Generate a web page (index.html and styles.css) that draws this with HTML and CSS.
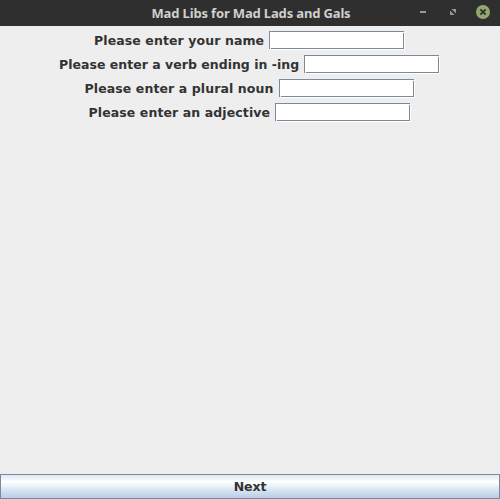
FILE: index.html
```html
<!DOCTYPE html>
<html lang="en">
<head>
<meta charset="utf-8">
<title>Mad Libs for Mad Lads and Gals</title>
<link rel="stylesheet" href="styles.css">
</head>
<body>
<header class="titlebar">
  <h1 class="title">Mad Libs for Mad Lads and Gals</h1>
  <div class="controls">
    <svg width="14" height="14" viewBox="0 0 14 14"><path d="M4 6h6v2H4z" fill="#999"/></svg>
    <svg width="14" height="14" viewBox="0 0 14 14"><path d="M5.5 4H10v4.500zM4 5.500V10h4.500z" fill="#999"/></svg>
    <svg width="14" height="14" viewBox="0 0 14 14"><circle cx="7" cy="7" r="7" fill="#92a870"/><path d="M4.300 4.300l5.400 5.400M9.700 4.300l-5.400 5.400" stroke="#2f2f2f" stroke-width="1.800"/></svg>
  </div>
</header>
<main class="form">
  <div class="row"><label class="label name" for="name">Please enter your name</label><input class="field" id="name" type="text"></div>
  <div class="row"><label class="label verb" for="verb">Please enter a verb ending in -ing</label><input class="field" id="verb" type="text"></div>
  <div class="row"><label class="label noun" for="noun">Please enter a plural noun</label><input class="field" id="noun" type="text"></div>
  <div class="row"><label class="label adjective" for="adjective">Please enter an adjective</label><input class="field" id="adjective" type="text"></div>
</main>
<button class="next" type="button">Next</button>
</body>
</html>
```
FILE: styles.css
```css
* { box-sizing: border-box; }
body {
  margin: 0;
  height: 499px;
  display: flex;
  flex-direction: column;
  background: #eeeeee;
  color: #333333;
  font: bold 12.5px "DejaVu Sans", sans-serif;
  overflow: hidden;
}
.titlebar {
  height: 26px;
  flex: none;
  display: grid;
  grid-template-columns: 76px 1fr 76px;
  background: #2f2f2f;
}
.title {
  grid-column: 2;
  margin: 0;
  padding-left: 2px;
  text-align: center;
  white-space: nowrap;
  font: bold 13px/27px "Noto Sans", sans-serif;
  letter-spacing: -0.15px;
  color: #d0d0d0;
}
.controls {
  display: flex;
  gap: 16px;
  padding-top: 5px;
  margin-left: -8px;
}
.controls svg { flex: none; display: block; }
.form {
  flex: 1;
  display: flex;
  flex-direction: column;
  gap: 5px;
  padding-top: 5px;
}
.row {
  height: 19px;
  display: flex;
  justify-content: center;
  gap: 5px;
  padding-right: 1px;
}
.label {
  flex: none;
  line-height: 20px;
  white-space: nowrap;
}
.name { width: 170px; letter-spacing: 0.1px; }
.verb { width: 240px; letter-spacing: 0.02px; }
.noun { width: 189px; letter-spacing: 0.1px; }
.adjective { width: 181px; letter-spacing: 0.1px; }
.field {
  flex: none;
  width: 136px;
  height: 19px;
  padding: 2px;
  border: 0;
  outline: 0;
  font: 12px "DejaVu Sans", sans-serif;
  background:
    linear-gradient(#eee, #eee) 0 18px / 1px 1px no-repeat,
    linear-gradient(#eee, #eee) 1px 17px / 1px 1px no-repeat,
    linear-gradient(#eee, #eee) 135px 0 / 1px 1px no-repeat,
    linear-gradient(#eee, #eee) 134px 1px / 1px 1px no-repeat,
    linear-gradient(#7a8a99, #7a8a99) 0 0 / 135px 1px no-repeat,
    linear-gradient(#7a8a99, #7a8a99) 0 0 / 1px 18px no-repeat,
    linear-gradient(#7a8a99, #7a8a99) 0 17px / 135px 1px no-repeat,
    linear-gradient(#7a8a99, #7a8a99) 134px 0 / 1px 18px no-repeat,
    #ffffff;
}
.next {
  flex: none;
  height: 25px;
  padding: 0;
  border: 1px solid #7a8a99;
  font: bold 12.5px/23px "DejaVu Sans", sans-serif;
  letter-spacing: -0.1px;
  color: #333333;
  background: linear-gradient(#dde8f3 0%, #ffffff 30%, #dde8f3 60%, #b8cfe5 100%);
}
```
